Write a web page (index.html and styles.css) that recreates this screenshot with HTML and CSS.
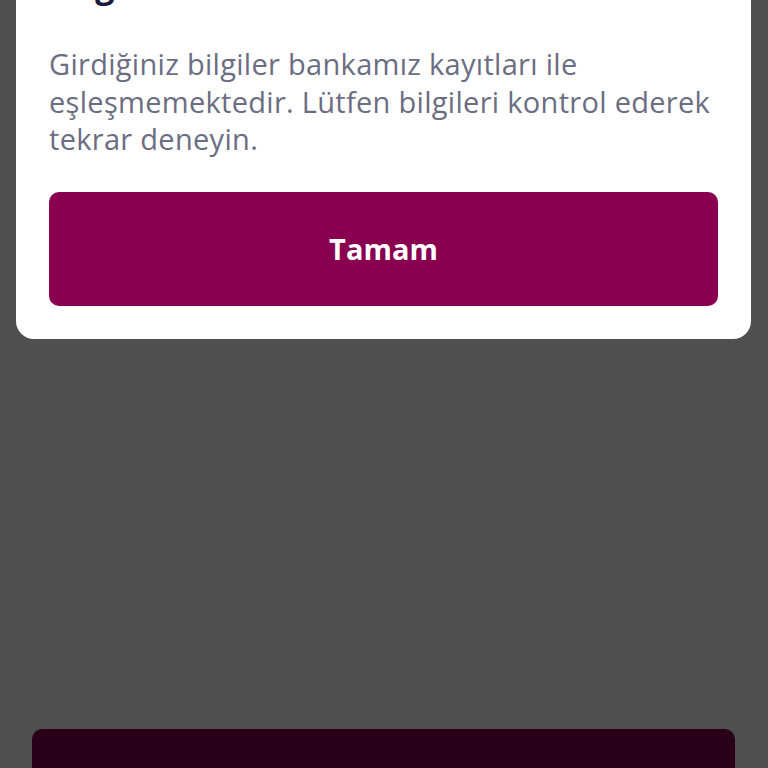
FILE: index.html
```html
<!DOCTYPE html>
<html lang="tr">
<head>
<meta charset="utf-8">
<link rel="stylesheet" href="styles.css">
</head>
<body>
<div class="screen">
  <div class="card">
    <h1 class="title">Doğrulama Hatası</h1>
    <p class="message">Girdiğiniz bilgiler bankamız kayıtları ile eşleşmemektedir. Lütfen bilgileri kontrol ederek tekrar deneyin.</p>
    <button class="primary">Tamam</button>
  </div>
  <div class="bottom-bar"></div>
</div>
</body>
</html>
```
FILE: styles.css
```css
html, body {
  margin: 0;
  padding: 0;
  background: #4f4f4f;
}
.screen {
  width: 768px;
  height: 768px;
  overflow: hidden;
  display: flex;
  flex-direction: column;
  font-family: "Open Sans", Lato, sans-serif;
}
.card {
  margin: -65px 17px 0 16px;
  background: #ffffff;
  border-radius: 0 0 18px 18px;
  padding: 30px 33px 33px 33px;
  display: flex;
  flex-direction: column;
}
.title {
  margin: 0;
  font-size: 34px;
  line-height: 40px;
  font-weight: 700;
  color: #1c1b3a;
}
.message {
  margin: 40px 0 34px 0;
  font-size: 29px;
  line-height: 37.5px;
  letter-spacing: 0.3px;
  color: #6b6d82;
}
.primary {
  height: 114px;
  border: none;
  border-radius: 10px;
  background: #8a0050;
  color: #ffffff;
  font-family: "Open Sans", Lato, sans-serif;
  font-size: 29px;
  font-weight: 700;
}
.bottom-bar {
  margin: auto 33px 0 32px;
  height: 39px;
  background: #2a0018;
  border-radius: 10px 10px 0 0;
}
```
